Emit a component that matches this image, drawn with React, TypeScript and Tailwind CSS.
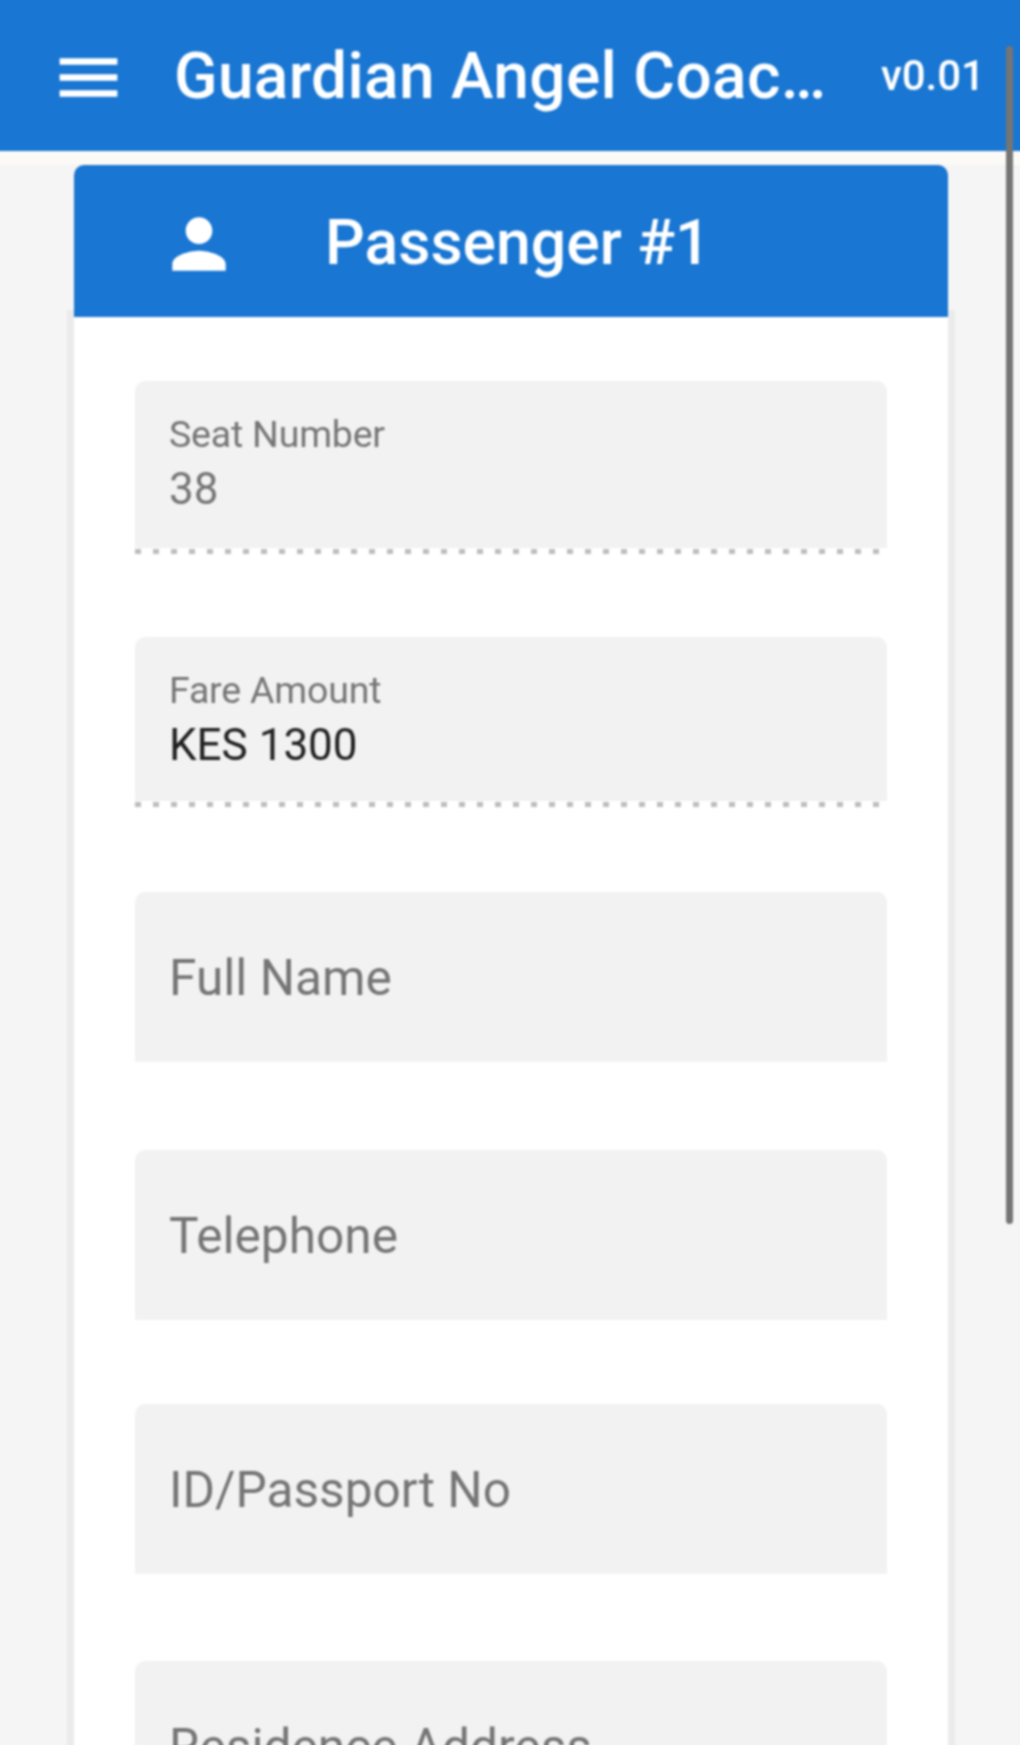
const fields = [
  { label: "Seat Number", value: "38", valueClass: "text-[#757575]", pad: "pt-[31px]", gap: "mt-0", tall: "h-[173px]" },
  { label: "Fare Amount", value: "KES 1300", valueClass: "text-[#212121]", pad: "pt-[31px]", gap: "mt-[83px]", tall: "h-[170px]" },
  { placeholder: "Full Name", gap: "mt-[85px]" },
  { placeholder: "Telephone", gap: "mt-[88px]" },
  { placeholder: "ID/Passport No", gap: "mt-[84px]" },
  { placeholder: "Residence Address", gap: "mt-[87px]" },
];

type FieldProps = {
  label?: string;
  value?: string;
  valueClass?: string;
  placeholder?: string;
  pad?: string;
  gap: string;
  tall?: string;
};

function Field({ label, value, valueClass, placeholder, pad, gap, tall }: FieldProps) {
  // seat and fare are read only, those get the dotted underline
  if (label) {
    return (
      <div className={`shrink-0 flex flex-col ${tall} ${gap}`}>
        <div className={`flex-1 bg-[#f2f2f2] rounded-t-[10px] px-[34px] ${pad}`}>
          <div className="text-[37.5px] leading-[44px] text-[#757575] tracking-[-0.2px]">{label}</div>
          <div className={`text-[44px] leading-[52px] mt-[7px] ${valueClass}`}>{value}</div>
        </div>
        <div className="h-[5px] mt-[1px] bg-[linear-gradient(to_right,#bdbdbd_6px,transparent_6px)] bg-[length:18px_5px] bg-repeat-x" />
      </div>
    );
  }
  return (
    <div className={`h-[170px] shrink-0 bg-[#f2f2f2] rounded-t-[10px] px-[34px] flex items-center ${gap}`}>
      <span className="text-[49.6px] leading-[56px] text-[#757575] mt-[2px]">{placeholder}</span>
    </div>
  );
}

export default function App() {
  return (
    <div className="h-screen overflow-hidden bg-[#f5f5f5]">
      {/* blur layer runs a bit past the window so the edges stay solid */}
      <div className="relative -ml-[6px] -mt-[6px] w-[1032px] h-[1757px] bg-[#f5f5f5] font-['Roboto',sans-serif] blur-[1px]">
        {/* Toolbar */}
        <div className="h-[157px] pt-[6px] bg-[#1976d2] flex items-center pl-[56px] pr-[41px] text-white">
          <svg viewBox="0 0 24 24" fill="currentColor" className="w-[77px] h-[77px] shrink-0 mt-[4px]">
            <path d="M3 18h18v-2H3v2zm0-5h18v-2H3v2zm0-7v2h18V6H3z" />
          </svg>
          <div className="ml-[47px] mt-[2px] w-[656px] truncate text-[64px] tracking-[0.33px] font-medium leading-[76px]">Guardian Angel Coaches</div>
          <span className="ml-auto text-[42px] font-medium leading-[48px]">v0.01</span>
        </div>
        <div className="h-[14px] bg-[#fcfaf6]" />

        {/* Card */}
        <div className="ml-[80px] mr-[78px]">
          <div className="relative z-10 h-[152px] bg-[#1976d2] rounded-t-[10px] flex items-center text-white">
            <svg viewBox="0 0 24 24" fill="currentColor" className="w-[80px] h-[80px] ml-[85px] mt-[6px] shrink-0">
              <path d="M12 12c2.21 0 4-1.79 4-4s-1.79-4-4-4-4 1.79-4 4 1.79 4 4 4zm0 2c-2.67 0-8 1.34-8 4v2h16v-2c0-2.66-5.33-4-8-4z" />
            </svg>
            <h1 className="ml-[86px] mt-[4px] text-[62.5px] font-medium leading-[72px]">Passenger #1</h1>
          </div>
          <div className="bg-white shadow-[0_0_0_7px_#ebebeb] pt-[64px] px-[61px] flex flex-col h-[1500px]">
            {fields.map((f) => (
              <Field key={f.label ?? f.placeholder} {...f} />
            ))}
          </div>
        </div>

        {/* Scrollbar thumb */}
        <div className="absolute top-[52px] right-[13px] w-[7px] h-[1178px] rounded-full bg-[#757575]" />
      </div>
    </div>
  );
}
